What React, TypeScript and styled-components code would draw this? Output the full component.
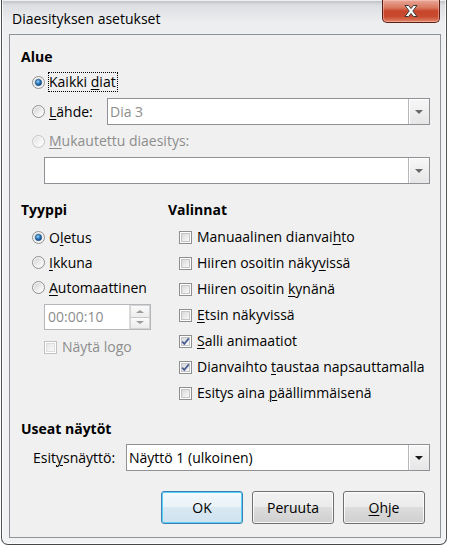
import { useId } from 'react';
import styled, { createGlobalStyle } from 'styled-components';

const FONT = `"Open Sans", "Noto Sans", "DejaVu Sans", sans-serif`;

const GlobalStyle = createGlobalStyle`
  html, body {
    margin: 0;
    padding: 0;
    background: #ffffff;
  }
  body {
    font-family: ${FONT};
    font-size: 14px;
    color: #000;
  }
`;

const Window = styled.div`
  box-sizing: border-box;
  width: 446px;
  height: 545px;
  margin-left: 1px;
  border: 1px solid rgba(30, 30, 30, 0.75);
  border-top: none;
  border-radius: 0 0 7px 7px;
  background: linear-gradient(#b9bcc0 0, #dcdee1 5px, #eceef0 22px, #f1f2f4 60px, #f1f2f4 100%);
  box-shadow: inset 0 0 0 1px rgba(255, 255, 255, 0.75);
  display: flex;
  flex-direction: column;
  padding: 0 5px 6px 7px;
`;

const TitleBar = styled.div`
  height: 34px;
  display: flex;
  align-items: flex-start;
`;

const Title = styled.div`
  margin: 9px 0 0 3px;
  font-size: 14px;
  line-height: 20px;
  color: #000;
`;

const CloseButton = styled.div`
  margin-left: auto;
  margin-right: 1px;
  width: 58px;
  height: 23px;
  box-sizing: border-box;
  border: 1px solid #5d1e16;
  border-top: none;
  border-radius: 0 0 5px 5px;
  background: linear-gradient(#e9a899 0, #d9785f 35%, #c7452c 50%, #c84a2e 75%, #e2876a 100%);
  box-shadow: inset 0 0 0 1px rgba(255, 210, 200, 0.45);
  display: flex;
  align-items: center;
  justify-content: center;
`;

const Client = styled.div`
  flex: 1;
  box-sizing: border-box;
  border: 1px solid #8f9398;
  background: #f0f0f0;
  padding: 12px 10px 13px 11px;
  display: flex;
  flex-direction: column;
`;

const Heading = styled.div<{ $top?: number }>`
  height: 20px;
  line-height: 20px;
  font-weight: 700;
  margin-top: ${(p) => p.$top ?? 0}px;
`;

const Row = styled.div<{ $top?: number; $height?: number; $indent?: number }>`
  display: flex;
  align-items: center;
  height: ${(p) => p.$height ?? 20}px;
  margin-top: ${(p) => p.$top ?? 0}px;
  padding-left: ${(p) => p.$indent ?? 11}px;
`;

const Label = styled.span<{ $disabled?: boolean; $focused?: boolean; $width?: number; $gap?: number }>`
  box-sizing: border-box;
  height: 20px;
  line-height: 18px;
  margin-left: ${(p) => p.$gap ?? 3}px;
  border: 1px dotted ${(p) => (p.$focused ? '#000' : 'transparent')};
  padding-right: 1px;
  white-space: nowrap;
  color: ${(p) => (p.$disabled ? '#8d8d8d' : '#000')};
  ${(p) => (p.$width ? `width: ${p.$width}px; flex: none;` : '')}
`;

const Key = styled.span`
  text-decoration: underline;
  text-underline-offset: 2px;
  text-decoration-thickness: 1px;
`;

const Combo = styled.div<{ $top?: number; $indent?: number }>`
  box-sizing: border-box;
  flex: 1;
  height: 27px;
  margin-top: ${(p) => p.$top ?? 0}px;
  margin-left: ${(p) => p.$indent ?? 0}px;
  border: 1px solid #8e9196;
  background: #fff;
  display: flex;
  align-items: stretch;
`;

const ComboText = styled.div<{ $disabled?: boolean }>`
  flex: 1;
  padding-left: 2px;
  line-height: 25px;
  color: ${(p) => (p.$disabled ? '#8d8d8d' : '#000')};
`;

const DropButton = styled.div`
  width: 21px;
  box-sizing: border-box;
  border-left: 1px solid #b5b7ba;
  background: linear-gradient(#f7f7f7, #e6e6e6);
  box-shadow: inset 1px 1px 0 #ffffff;
  display: flex;
  align-items: center;
  justify-content: center;
`;

const Arrow = styled.div<{ $dark?: boolean }>`
  width: 0;
  height: 0;
  border-left: 4px solid transparent;
  border-right: 4px solid transparent;
  border-top: 4px solid ${(p) => (p.$dark ? '#1a1a1a' : '#6a6a6a')};
`;

const Columns = styled.div`
  display: flex;
  margin-top: 16px;
  height: 206px;
`;

const LeftColumn = styled.div`
  width: 147px;
  display: flex;
  flex-direction: column;
`;

const RightColumn = styled.div`
  flex: 1;
  display: flex;
  flex-direction: column;
`;

const Spin = styled.div`
  box-sizing: border-box;
  margin: 4px 0 0 23px;
  width: 107px;
  height: 26px;
  border: 1px solid #b4b7bc;
  background: #fff;
  display: flex;
`;

const SpinText = styled.div`
  flex: 1;
  padding-left: 3px;
  line-height: 24px;
  color: #8d8d8d;
`;

const SpinButtons = styled.div`
  width: 20px;
  display: flex;
  flex-direction: column;
  border-left: 1px solid #dcdcdc;
`;

const SpinHalf = styled.div<{ $up?: boolean }>`
  flex: 1;
  display: flex;
  align-items: center;
  justify-content: center;
  background: linear-gradient(#fafafa, #ececec);
  border: 1px solid #d4d4d4;
  ${(p) => (p.$up ? 'border-bottom-color: #c8c8c8;' : 'border-top: none;')}
`;

const SmallArrow = styled.div<{ $up?: boolean }>`
  width: 0;
  height: 0;
  border-left: 4px solid transparent;
  border-right: 4px solid transparent;
  ${(p) => (p.$up ? 'border-bottom: 3px solid #9a9a9a;' : 'border-top: 3px solid #9a9a9a;')}
`;

const Buttons = styled.div`
  display: flex;
  justify-content: flex-end;
  gap: 9px;
  margin: 20px 5px 0 0;
`;

const Button = styled.div<{ $default?: boolean }>`
  box-sizing: border-box;
  width: 82px;
  height: 33px;
  border-radius: 3px;
  border: 1px solid ${(p) => (p.$default ? '#3c7fb1' : '#707070')};
  background: ${(p) =>
    p.$default
      ? 'linear-gradient(#f4f9fc 0, #eaf3f8 48%, #d9e9f3 50%, #cfe2ef 100%)'
      : 'linear-gradient(#f2f2f2 0, #ebebeb 48%, #dddddd 50%, #cfcfcf 100%)'};
  box-shadow: inset 0 0 0 1px ${(p) => (p.$default ? '#5ad0f8' : 'rgba(255,255,255,0.8)')};
  display: flex;
  align-items: center;
  justify-content: center;
  line-height: 20px;
`;

function Radio({ checked, disabled }: { checked?: boolean; disabled?: boolean }) {
  const id = useId().replace(/:/g, '');
  return (
    <svg width="13" height="13" viewBox="0 0 13 13" style={{ flex: 'none' }}>
      <defs>
        <linearGradient id={`ro${id}`} x1="0" y1="0" x2="1" y2="1">
          <stop offset="0" stopColor={disabled ? '#e2e2e2' : '#d4d4d4'} />
          <stop offset="1" stopColor="#ffffff" />
        </linearGradient>
        <radialGradient id={`rd${id}`} cx="0.4" cy="0.35" r="0.7">
          <stop offset="0" stopColor="#9ad6f7" />
          <stop offset="0.5" stopColor="#2b7ac0" />
          <stop offset="1" stopColor="#0f3e74" />
        </radialGradient>
      </defs>
      <circle cx="6.5" cy="6.5" r="6" fill="#f6f6f6" stroke={disabled ? '#c4c4c4' : '#8e8f8f'} />
      <circle cx="6.5" cy="6.5" r="4.5" fill={`url(#ro${id})`} />
      {checked && <circle cx="6.5" cy="6.5" r="3.2" fill={`url(#rd${id})`} stroke="#1d4f80" strokeWidth="0.6" />}
    </svg>
  );
}

function Check({ checked, disabled }: { checked?: boolean; disabled?: boolean }) {
  const id = useId().replace(/:/g, '');
  return (
    <svg width="13" height="13" viewBox="0 0 13 13" style={{ flex: 'none' }}>
      <defs>
        <linearGradient id={`cb${id}`} x1="0" y1="0" x2="1" y2="1">
          <stop offset="0" stopColor={disabled ? '#e6e6e6' : '#d7d7d7'} />
          <stop offset="1" stopColor="#fbfbfb" />
        </linearGradient>
      </defs>
      <rect x="0.5" y="0.5" width="12" height="12" fill="#fff" stroke={disabled ? '#c2c2c2' : '#8e8f8f'} />
      <rect x="2.5" y="2.5" width="8" height="8" fill={`url(#cb${id})`} stroke={disabled ? '#dcdcdc' : '#c3c5c8'} />
      {checked && <path d="M3.2 6.6 L5.3 8.9 L9.8 3.4" fill="none" stroke="#4a5e94" strokeWidth="1.7" />}
    </svg>
  );
}

function CloseGlyph() {
  return (
    <svg width="16" height="14" viewBox="0 0 16 14">
      <path
        d="M2 1.5 L5.6 1.5 L8 4.6 L10.4 1.5 L14 1.5 L9.8 7 L14 12.5 L10.4 12.5 L8 9.4 L5.6 12.5 L2 12.5 L6.2 7 Z"
        fill="#ffffff"
        stroke="#3b3b3b"
        strokeWidth="1"
        strokeLinejoin="round"
      />
    </svg>
  );
}

const options: { before: string; key: string; after: string; checked?: boolean }[] = [
  { before: 'Manuaalinen dianvai', key: 'h', after: 'to' },
  { before: 'Hiiren osoitin näky', key: 'v', after: 'issä' },
  { before: 'Hiiren osoitin ', key: 'k', after: 'ynänä' },
  { before: '', key: 'E', after: 'tsin näkyvissä' },
  { before: '', key: 'S', after: 'alli animaatiot', checked: true },
  { before: 'Dianvaihto ', key: 't', after: 'austaa napsauttamalla', checked: true },
  { before: 'Esitys aina ', key: 'p', after: 'äällimmäisenä' },
];

export default function App() {
  return (
    <>
      <GlobalStyle />
      <Window>
        <TitleBar>
          <Title>Diaesityksen asetukset</Title>
          <CloseButton>
            <CloseGlyph />
          </CloseButton>
        </TitleBar>
        <Client>
          <Heading>Alue</Heading>
          <Row $top={5}>
            <Radio checked />
            <Label $focused>
              Kaikki <Key>d</Key>iat
            </Label>
          </Row>
          <Row $top={6} $height={27}>
            <Radio />
            <Label $width={59}>
              <Key>L</Key>ähde:
            </Label>
            <Combo>
              <ComboText $disabled>Dia 3</ComboText>
              <DropButton>
                <Arrow />
              </DropButton>
            </Combo>
          </Row>
          <Row $top={6}>
            <Radio disabled />
            <Label $disabled>
              <Key>M</Key>ukautettu diaesitys:
            </Label>
          </Row>
          <Row $top={6} $height={27} $indent={23}>
            <Combo>
              <ComboText />
              <DropButton>
                <Arrow />
              </DropButton>
            </Combo>
          </Row>

          <Columns>
            <LeftColumn>
              <Heading>Tyyppi</Heading>
              <Row $top={5} $height={25}>
                <Radio checked />
                <Label>
                  O<Key>l</Key>etus
                </Label>
              </Row>
              <Row $height={25}>
                <Radio />
                <Label>
                  <Key>I</Key>kkuna
                </Label>
              </Row>
              <Row $height={25}>
                <Radio />
                <Label>
                  <Key>A</Key>utomaattinen
                </Label>
              </Row>
              <Spin>
                <SpinText>00:00:10</SpinText>
                <SpinButtons>
                  <SpinHalf $up>
                    <SmallArrow $up />
                  </SpinHalf>
                  <SpinHalf>
                    <SmallArrow />
                  </SpinHalf>
                </SpinButtons>
              </Spin>
              <Row $top={7} $indent={23}>
                <Check disabled />
                <Label $disabled $gap={4}>
                  Näytä lo<Key>g</Key>o
                </Label>
              </Row>
            </LeftColumn>
            <RightColumn>
              <Heading>Valinnat</Heading>
              <div style={{ height: 4 }} />
              {options.map((o) => (
                <Row key={o.before + o.key} $height={26}>
                  <Check checked={o.checked} />
                  <Label $gap={4}>
                    {o.before}
                    <Key>{o.key}</Key>
                    {o.after}
                  </Label>
                </Row>
              ))}
            </RightColumn>
          </Columns>

          <Heading $top={13}>Useat näytöt</Heading>
          <Row $top={5} $height={27}>
            <Label $width={94} $gap={0}>
              Esit<Key>y</Key>snäyttö:
            </Label>
            <Combo>
              <ComboText>Näyttö 1 (ulkoinen)</ComboText>
              <DropButton>
                <Arrow $dark />
              </DropButton>
            </Combo>
          </Row>

          <Buttons>
            <Button $default>OK</Button>
            <Button>Peruuta</Button>
            <Button>
              <Key>O</Key>hje
            </Button>
          </Buttons>
        </Client>
      </Window>
    </>
  );
}
